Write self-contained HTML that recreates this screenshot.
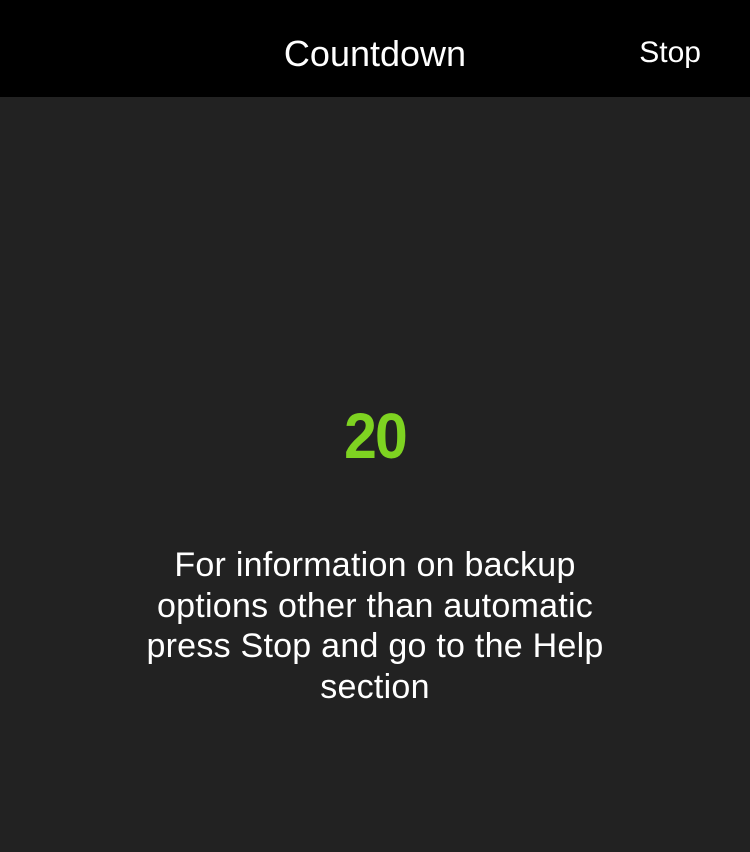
<!DOCTYPE html>
<html><head><meta charset="utf-8"><style>
html,body{margin:0;padding:0;width:750px;height:852px;background:#222222;overflow:hidden;font-family:"Liberation Sans",sans-serif;color:#fff}
.hdr{position:absolute;left:0;top:0;width:750px;height:97px;background:#000}
.title{position:absolute;left:0;width:750px;top:32px;text-align:center;font-size:36px;line-height:44px}
.stop{position:absolute;right:49px;top:35px;font-size:30px;line-height:36px}
.num{position:absolute;left:0;width:750px;top:398px;text-align:center;font-size:64px;font-weight:bold;color:#7ed321;line-height:76px;letter-spacing:-2px;transform:scaleX(0.92)}
.msg{position:absolute;left:0;width:750px;top:545px;text-align:center;font-size:34px;line-height:40.5px;letter-spacing:0.25px}
</style></head><body>
<div class="hdr"><div class="title">Countdown</div><div class="stop">Stop</div></div>
<div class="num">20</div>
<div class="msg">For information on backup<br>options other than automatic<br>press Stop and go to the Help<br>section</div>
</body></html>
